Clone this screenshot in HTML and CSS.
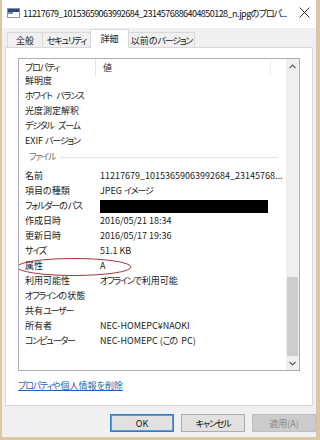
FILE: index.html
```html
<!DOCTYPE html>
<html lang="ja">
<head>
  <meta charset="UTF-8" />
  <title>プロパティ</title>
  <link rel="stylesheet" href="styles.css">
</head>
<body>
  <div class="window">
    <div class="titlebar">
      <svg class="file-icon" width="13" height="10" viewBox="0 0 13 10">
        <rect x="0.5" y="0.5" width="12" height="9" fill="#fff" stroke="#8a96a3"/>
        <rect x="1" y="1" width="11" height="3" fill="#2b4a78"/>
        <rect x="1" y="4" width="5" height="2" fill="#6f8fb8"/>
      </svg>
      <span class="title">11217679_10153659063992684_2314576886404850128_n.jpgの<span class="k">プロパ</span>...</span>
      <svg class="close" width="11" height="11" viewBox="0 0 11 11">
        <path d="M0.5 0.5 L10.5 10.5 M10.5 0.5 L0.5 10.5" stroke="#333" stroke-width="1"/>
      </svg>
    </div>

    <div class="tabs">
      <div class="tab tab-general">全般</div>
      <div class="tab tab-security"><span class="k">セキュリティ</span></div>
      <div class="tab tab-details active">詳細</div>
      <div class="tab tab-previous">以前の<span class="k">バージョン</span></div>
    </div>

    <div class="panel">
      <div class="listview">
        <div class="list-main">
          <div class="list-header">
            <div class="col-name"><span class="k">プロパティ</span></div>
            <div class="col-value">値</div>
            <div class="col-rest"></div>
          </div>
          <div class="list-body">
            <div class="rows">
              <div class="row"><div class="col-name">鮮明度</div><div class="col-value"></div></div>
              <div class="row"><div class="col-name"><span class="k sp">ホワイト</span> <span class="k">バランス</span></div><div class="col-value"></div></div>
              <div class="row"><div class="col-name">光度測定解釈</div><div class="col-value"></div></div>
              <div class="row"><div class="col-name"><span class="k sp">デジタル</span> <span class="k">ズーム</span></div><div class="col-value"></div></div>
              <div class="row"><div class="col-name">EXIF <span class="k">バージョン</span></div><div class="col-value"></div></div>
              <div class="group"><span class="k">ファイル</span><i class="group-line"></i></div>
              <div class="row"><div class="col-name">名前</div><div class="col-value">11217679_10153659063992684_23145768...</div></div>
              <div class="row"><div class="col-name">項目の種類</div><div class="col-value">JPEG <span class="k">イメージ</span></div></div>
              <div class="row"><div class="col-name"><span class="k">フォルダー</span>の<span class="k">パス</span></div><div class="col-value"><span class="redacted"></span></div></div>
              <div class="row"><div class="col-name">作成日時</div><div class="col-value">2016/05/21 18:34</div></div>
              <div class="row"><div class="col-name">更新日時</div><div class="col-value">2016/05/17 19:36</div></div>
              <div class="row"><div class="col-name"><span class="k">サイズ</span></div><div class="col-value">51.1 KB</div></div>
              <div class="row marked">
                <div class="col-name">属性</div><div class="col-value">A</div>
                <svg class="circle" width="118" height="20" viewBox="0 0 118 20">
                  <ellipse cx="59" cy="10" rx="57" ry="8.5" fill="none" stroke="#a8343a" stroke-width="1"/>
                </svg>
              </div>
              <div class="row"><div class="col-name">利用可能性</div><div class="col-value"><span class="k">オフライン</span>で利用可能</div></div>
              <div class="row"><div class="col-name"><span class="k">オフライン</span>の状態</div><div class="col-value"></div></div>
              <div class="row"><div class="col-name">共有<span class="k">ユーザー</span></div><div class="col-value"></div></div>
              <div class="row"><div class="col-name">所有者</div><div class="col-value">NEC-HOMEPC¥NAOKI</div></div>
              <div class="row"><div class="col-name"><span class="k">コンピューター</span></div><div class="col-value">NEC-HOMEPC (<span class="k sp">この</span> PC)</div></div>
            </div>
          </div>
        </div>
        <div class="scrollbar">
          <div class="sb-arrow">
            <svg width="7" height="5" viewBox="0 0 7 5"><path d="M0.5 4 L3.5 1 L6.5 4" fill="none" stroke="#606060" stroke-width="1.2"/></svg>
          </div>
          <div class="sb-track"><div class="sb-thumb"></div></div>
          <div class="sb-arrow">
            <svg width="7" height="5" viewBox="0 0 7 5"><path d="M0.5 1 L3.5 4 L6.5 1" fill="none" stroke="#606060" stroke-width="1.2"/></svg>
          </div>
        </div>
      </div>
      <a class="remove-link" href="#"><span class="k">プロパティ</span>や個人情報を削除</a>
    </div>

    <div class="buttons">
      <button class="btn default">OK</button>
      <button class="btn"><span class="k">キャンセル</span></button>
      <button class="btn disabled">適用(A)</button>
    </div>
  </div>
</body>
</html>
```

FILE: styles.css
```css
body {
  margin: 0;
  padding: 0;
  background: #f0f0f0;
  font-family: "Noto Sans CJK JP", "Noto Sans", sans-serif;
  font-size: 9px;
  font-feature-settings: "palt";
  color: #1a1a1a;
}
/* katakana in the UI font is much narrower than in Noto */
.k {
  letter-spacing: -1.2px;
}
.k.sp {
  margin-right: 2.5px;
}
.window {
  width: 320px;
  height: 440px;
  box-sizing: border-box;
  background: #f0f0f0;
  border-left: 2px solid #dcc7a4;
  border-right: 4px solid #dcc7a4;
  border-bottom: 3px solid #dcc7a4;
  display: flex;
  flex-direction: column;
}
.titlebar {
  height: 28px;
  background: #fff;
  display: flex;
  align-items: center;
  padding-left: 5px;
  padding-right: 6px;
  flex-shrink: 0;
}
.file-icon {
  flex-shrink: 0;
  margin-right: 3px;
  margin-top: -2px;
}
.title {
  flex: 1;
  white-space: nowrap;
  overflow: hidden;
  font-size: 9px;
  letter-spacing: -0.55px;
  color: #111;
  margin-top: -2px;
}
.close {
  flex-shrink: 0;
  margin-left: 8px;
  margin-top: -3px;
}
.tabs {
  height: 19px;
  display: flex;
  align-items: flex-end;
  padding-left: 5px;
  flex-shrink: 0;
}
.tab {
  height: 15px;
  box-sizing: border-box;
  border: 1px solid #d9d9d9;
  border-bottom: none;
  margin-right: -1px;
  background: #f0f0f0;
  display: flex;
  align-items: center;
  justify-content: center;
  white-space: nowrap;
  line-height: 1;
}
.tab-general { width: 36px; }
.tab-security { width: 49px; }
.tab-details { width: 39px; }
.tab-previous { width: 67px; }
.tab.active {
  height: 19px;
  margin-bottom: -1px;
  background: #fff;
  position: relative;
  z-index: 1;
  padding-bottom: 2px;
}
.panel {
  height: 359px;
  box-sizing: border-box;
  margin: 0 3px;
  background: #fff;
  border: 1px solid #d9d9d9;
  padding: 10px 0 0 12px;
  flex-shrink: 0;
}
.listview {
  width: 282px;
  height: 313px;
  box-sizing: border-box;
  border: 1px solid #abadb3;
  display: flex;
}
.list-main {
  flex: 1;
  display: flex;
  flex-direction: column;
  overflow: hidden;
}
.list-header {
  height: 17px;
  display: flex;
  line-height: 17px;
  color: #2a2a2a;
  background: #fff;
  position: relative;
  z-index: 1;
  flex-shrink: 0;
}
.list-header .col-name {
  border-right: 1px solid #e5e5e5;
}
.list-header .col-value {
  flex: none;
  width: 175px;
  padding-left: 7px;
  border-right: 1px solid #f0f0f0;
}
.col-name {
  width: 77px;
  box-sizing: border-box;
  padding-left: 6px;
  white-space: nowrap;
  overflow: hidden;
  flex-shrink: 0;
}
.col-value {
  flex: 1;
  box-sizing: border-box;
  padding-left: 4px;
  white-space: nowrap;
  overflow: hidden;
}
.list-body {
  flex: 1;
  overflow: hidden;
}
.rows {
  margin-top: -3px;
}
.row {
  height: 15px;
  line-height: 15px;
  display: flex;
}
.row.marked {
  position: relative;
}
.circle {
  position: absolute;
  left: -4px;
  top: -1px;
}
.group {
  height: 20px;
  display: flex;
  align-items: center;
  padding-left: 10px;
  padding-right: 8px;
  color: #6a6a6a;
}
.group span {
  margin-top: -3px;
}
.group-line {
  flex: 1;
  height: 1px;
  background: #e2e2e2;
  margin-left: 5px;
  margin-top: -1px;
}
.redacted {
  display: inline-block;
  width: 168px;
  height: 13px;
  background: #000;
  vertical-align: middle;
  margin-top: -1px;
}
.scrollbar {
  width: 13px;
  background: #f0f0f0;
  display: flex;
  flex-direction: column;
  flex-shrink: 0;
}
.sb-arrow {
  height: 14px;
  display: flex;
  align-items: center;
  justify-content: center;
  flex-shrink: 0;
}
.sb-track {
  flex: 1;
  display: flex;
  flex-direction: column;
  justify-content: flex-end;
  padding: 0 1px;
}
.sb-thumb {
  height: 79px;
  background: #cdcdcd;
}
.remove-link {
  display: block;
  margin-top: 9px;
  width: max-content;
  line-height: 12px;
  color: #1f65b5;
  text-decoration: underline;
}
.buttons {
  display: flex;
  justify-content: flex-end;
  gap: 7px;
  padding: 8px 0 0 0;
}
.btn {
  width: 64px;
  height: 18px;
  box-sizing: border-box;
  background: #e1e1e1;
  border: 1px solid #adadad;
  font-family: inherit;
  font-size: 9px;
  font-feature-settings: "palt";
  color: #111;
  padding: 0;
  line-height: 1;
}
.btn.default {
  border: 1px solid #2b7fc6;
  box-shadow: inset 0 0 0 1px #5c9bd6;
}
.btn.disabled {
  background: #cccccc;
  border-color: #bfbfbf;
  color: #8a8a8a;
}
```
